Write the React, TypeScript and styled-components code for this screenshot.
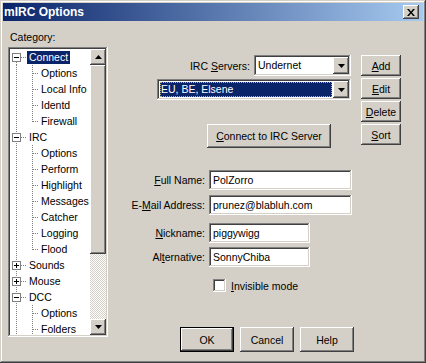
import React from "react";
import styled, { createGlobalStyle } from "styled-components";

const GlobalStyle = createGlobalStyle`
  html, body {
    margin: 0;
    padding: 0;
    background: #d4d0c8;
  }
  * {
    box-sizing: border-box;
  }
`;

const raised = `
  box-shadow: inset -1px -1px #404040, inset 1px 1px #ffffff,
    inset -2px -2px #808080, inset 2px 2px #d4d0c8;
`;

const sunken = `
  box-shadow: inset -1px -1px #ffffff, inset 1px 1px #808080,
    inset -2px -2px #d4d0c8, inset 2px 2px #404040;
`;

interface TreeItem {
  label: string;
  level: 0 | 1;
  open?: boolean;
  last?: boolean;
  selected?: boolean;
  first?: boolean;
}

const tree: TreeItem[] = [
  { label: "Connect", level: 0, open: true, selected: true, first: true },
  { label: "Options", level: 1 },
  { label: "Local Info", level: 1 },
  { label: "Identd", level: 1 },
  { label: "Firewall", level: 1, last: true },
  { label: "IRC", level: 0, open: true },
  { label: "Options", level: 1 },
  { label: "Perform", level: 1 },
  { label: "Highlight", level: 1 },
  { label: "Messages", level: 1 },
  { label: "Catcher", level: 1 },
  { label: "Logging", level: 1 },
  { label: "Flood", level: 1, last: true },
  { label: "Sounds", level: 0 },
  { label: "Mouse", level: 0 },
  { label: "DCC", level: 0, open: true },
  { label: "Options", level: 1 },
  { label: "Folders", level: 1 },
];

const TreeGuides: React.FC<{ item: TreeItem }> = ({ item }) => {
  const dot = { stroke: "#808080", strokeDasharray: "1 1" };
  if (item.level === 0) {
    return (
      <svg width="17" height="16" style={{ flexShrink: 0 }}>
        <line x1="6.5" y1={item.first ? 13 : 0} x2="6.5" y2="16" {...dot} />
        <line x1="11" y1="8.5" x2="17" y2="8.5" {...dot} />
        <rect x="2.5" y="4.5" width="8" height="8" fill="#fff" stroke="#808080" />
        <line x1="4" y1="8.5" x2="9" y2="8.5" stroke="#000" />
        {!item.open && <line x1="6.5" y1="6" x2="6.5" y2="11" stroke="#000" />}
      </svg>
    );
  }
  return (
    <svg width="29" height="16" style={{ flexShrink: 0 }}>
      <line x1="6.5" y1="0" x2="6.5" y2="16" {...dot} />
      <line x1="22.5" y1="0" x2="22.5" y2={item.last ? 9 : 16} {...dot} />
      <line x1="23" y1="8.5" x2="29" y2="8.5" {...dot} />
    </svg>
  );
};

const Arrow: React.FC<{ dir: "up" | "down" }> = ({ dir }) => (
  <svg width="7" height="4">
    <polygon points={dir === "up" ? "3.5,0 7,4 0,4" : "0,0 7,0 3.5,4"} fill="#000" />
  </svg>
);

const CloseGlyph = () => (
  <svg width="8" height="7">
    <path d="M0 0h2l2 2.5 2-2.5h2l-3 3.5 3 3.5h-2l-2-2.5-2 2.5h-2l3-3.5z" fill="#000" />
  </svg>
);

export default function App() {
  return (
    <>
      <GlobalStyle />
      <Window>
        <TitleBar>
          <Title>mIRC Options</Title>
          <CloseButton>
            <CloseGlyph />
          </CloseButton>
        </TitleBar>

        <Body>
          <LeftColumn>
            <Caption>Category:</Caption>
            <TreeBox>
              <TreeList>
                {tree.map((item, i) => (
                  <TreeRow key={i}>
                    <TreeGuides item={item} />
                    <TreeLabel $selected={item.selected}>{item.label}</TreeLabel>
                  </TreeRow>
                ))}
              </TreeList>
              <ScrollBar>
                <ScrollButton>
                  <Arrow dir="up" />
                </ScrollButton>
                <Thumb />
                <Track />
                <ScrollButton>
                  <Arrow dir="down" />
                </ScrollButton>
              </ScrollBar>
            </TreeBox>
          </LeftColumn>

          <RightColumn>
            <ServerBlock>
              <ServerMain>
                <ServerRow>
                  <FieldLabel>
                    IRC <u>S</u>ervers:
                  </FieldLabel>
                  <Combo $w={97}>
                    <ComboText>Undernet</ComboText>
                    <ComboButton>
                      <Arrow dir="down" />
                    </ComboButton>
                  </Combo>
                </ServerRow>
                <Combo $w={194} $mt={3}>
                  <ComboSelected>EU, BE, Elsene</ComboSelected>
                  <ComboButton>
                    <Arrow dir="down" />
                  </ComboButton>
                </Combo>
                <ConnectButton>
                  <u>C</u>onnect to IRC Server
                </ConnectButton>
              </ServerMain>
              <SideButtons>
                <SmallButton>
                  <u>A</u>dd
                </SmallButton>
                <SmallButton>
                  <u>E</u>dit
                </SmallButton>
                <SmallButton>
                  <u>D</u>elete
                </SmallButton>
                <SmallButton>
                  <u>S</u>ort
                </SmallButton>
              </SideButtons>
            </ServerBlock>

            <Form>
              <FieldRow>
                <RowLabel>
                  <u>F</u>ull Name:
                </RowLabel>
                <TextField $w={143}>PolZorro</TextField>
              </FieldRow>
              <FieldRow $mt={5}>
                <RowLabel>
                  E-<u>M</u>ail Address:
                </RowLabel>
                <TextField $w={143}>prunez@blabluh.com</TextField>
              </FieldRow>
              <FieldRow $mt={8}>
                <RowLabel>
                  <u>N</u>ickname:
                </RowLabel>
                <TextField $w={101}>piggywigg</TextField>
              </FieldRow>
              <FieldRow $mt={4}>
                <RowLabel>
                  Al<u>t</u>ernative:
                </RowLabel>
                <TextField $w={101}>SonnyChiba</TextField>
              </FieldRow>
            </Form>

            <CheckRow>
              <CheckBox />
              <span>
                <u>I</u>nvisible mode
              </span>
            </CheckRow>

            <DialogButtons>
              <DialogButton $default>OK</DialogButton>
              <DialogButton>Cancel</DialogButton>
              <DialogButton>Help</DialogButton>
            </DialogButtons>
          </RightColumn>
        </Body>
      </Window>
    </>
  );
}

/* --- Styled Components --- */
const Window = styled.div`
  width: 426px;
  height: 363px;
  padding: 3px;
  display: flex;
  flex-direction: column;
  background: #d4d0c8;
  box-shadow: inset -1px -1px #404040, inset 1px 1px #d4d0c8,
    inset -2px -2px #808080, inset 2px 2px #ffffff;
  font-family: "Liberation Sans", Arial, sans-serif;
  font-size: 10.5px;
  color: #000;
  overflow: hidden;
`;

const TitleBar = styled.div`
  height: 18px;
  flex-shrink: 0;
  display: flex;
  align-items: center;
  justify-content: space-between;
  padding: 0 4px 0 1px;
  background: linear-gradient(to right, #0a246a, #a6caf0);
`;

const Title = styled.span`
  color: #fff;
  font-weight: bold;
  font-size: 12px;
`;

const CloseButton = styled.div`
  width: 16px;
  height: 14px;
  display: flex;
  align-items: center;
  justify-content: center;
  background: #d4d0c8;
  ${raised}
`;

const Body = styled.div`
  flex: 1;
  display: flex;
  padding-left: 5px;
`;

const LeftColumn = styled.div`
  width: 100px;
  display: flex;
  flex-direction: column;
  padding-top: 10px;
`;

const Caption = styled.div`
  height: 13px;
  line-height: 13px;
  padding-left: 2px;
  margin-bottom: 3px;
`;

const TreeBox = styled.div`
  height: 290px;
  display: flex;
  padding: 2px;
  background: #fff;
  ${sunken}
`;

const TreeList = styled.div`
  flex: 1;
  overflow: hidden;
`;

const TreeRow = styled.div`
  height: 16px;
  display: flex;
  align-items: center;
`;

const TreeLabel = styled.span<{ $selected?: boolean }>`
  padding: 0 2px;
  height: 13px;
  line-height: 13px;
  white-space: nowrap;
  background: ${(p) => (p.$selected ? "#0a246a" : "transparent")};
  color: ${(p) => (p.$selected ? "#fff" : "#000")};
`;

const ScrollBar = styled.div`
  width: 16px;
  display: flex;
  flex-direction: column;
`;

const ScrollButton = styled.div`
  width: 16px;
  height: 16px;
  flex-shrink: 0;
  display: flex;
  align-items: center;
  justify-content: center;
  background: #d4d0c8;
  ${raised}
`;

const Thumb = styled.div`
  height: 189px;
  flex-shrink: 0;
  background: #d4d0c8;
  ${raised}
`;

const Track = styled.div`
  flex: 1;
  background-image: conic-gradient(#ffffff 25%, #d4d0c8 0 50%, #ffffff 0 75%, #d4d0c8 0);
  background-size: 2px 2px;
`;

const RightColumn = styled.div`
  width: 290px;
  margin-left: 10px;
  padding-top: 34px;
  display: flex;
  flex-direction: column;
`;

const ServerBlock = styled.div`
  display: flex;
  gap: 10px;
  margin-left: 39px;
`;

const ServerMain = styled.div`
  width: 194px;
  display: flex;
  flex-direction: column;
`;

const ServerRow = styled.div`
  height: 21px;
  display: flex;
  align-items: center;
  justify-content: flex-end;
  gap: 4px;
`;

const FieldLabel = styled.span`
  white-space: nowrap;
`;

const Combo = styled.div<{ $w: number; $mt?: number }>`
  width: ${(p) => p.$w}px;
  height: 21px;
  margin-top: ${(p) => p.$mt ?? 0}px;
  padding: 2px;
  display: flex;
  align-items: stretch;
  background: #fff;
  ${sunken}
`;

const ComboText = styled.div`
  flex: 1;
  padding-left: 2px;
  line-height: 17px;
`;

const ComboSelected = styled.div`
  flex: 1;
  margin: 1px;
  padding-left: 1px;
  line-height: 15px;
  background: #0a246a;
  color: #fff;
  outline: 1px dotted #b8b070;
  outline-offset: -1px;
`;

const ComboButton = styled.div`
  width: 16px;
  display: flex;
  align-items: center;
  justify-content: center;
  background: #d4d0c8;
  ${raised}
`;

const ConnectButton = styled.div`
  width: 124px;
  height: 24px;
  margin: 24px 0 0 50px;
  display: flex;
  align-items: center;
  justify-content: center;
  background: #d4d0c8;
  ${raised}
`;

const SideButtons = styled.div`
  width: 40px;
  display: flex;
  flex-direction: column;
  gap: 2px;
`;

const SmallButton = styled.div`
  height: 21px;
  display: flex;
  align-items: center;
  justify-content: center;
  background: #d4d0c8;
  ${raised}
`;

const Form = styled.div`
  margin-top: 22px;
  display: flex;
  flex-direction: column;
`;

const FieldRow = styled.div<{ $mt?: number }>`
  display: flex;
  align-items: center;
  margin-top: ${(p) => p.$mt ?? 0}px;
`;

const RowLabel = styled.span`
  width: 87px;
  margin-right: 4px;
  text-align: right;
  white-space: nowrap;
`;

const TextField = styled.div<{ $w: number }>`
  width: ${(p) => p.$w}px;
  height: 20px;
  padding: 0 4px;
  line-height: 20px;
  background: #fff;
  white-space: nowrap;
  ${sunken}
`;

const CheckRow = styled.div`
  margin: 12px 0 0 95px;
  display: flex;
  align-items: center;
  gap: 5px;
`;

const CheckBox = styled.div`
  width: 13px;
  height: 13px;
  background: #fff;
  ${sunken}
`;

const DialogButtons = styled.div`
  margin: 35px 0 0 62px;
  display: flex;
  gap: 6px;
`;

const DialogButton = styled.div<{ $default?: boolean }>`
  width: 54px;
  height: 25px;
  display: flex;
  align-items: center;
  justify-content: center;
  background: #d4d0c8;
  box-shadow: ${(p) =>
    p.$default
      ? "inset 0 0 0 1px #000, inset -2px -2px #404040, inset 2px 2px #ffffff, inset -3px -3px #808080"
      : "inset -1px -1px #404040, inset 1px 1px #ffffff, inset -2px -2px #808080, inset 2px 2px #d4d0c8"};
`;
